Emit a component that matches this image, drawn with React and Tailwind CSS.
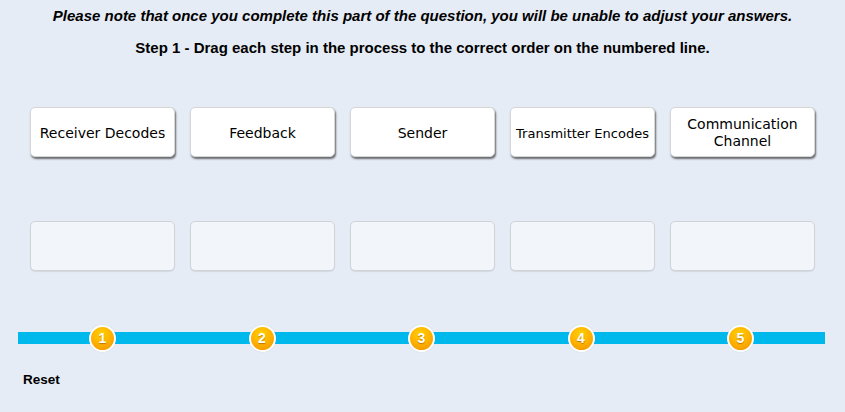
export default function App() {
  const cards = ["Receiver Decodes", "Feedback", "Sender", "Transmitter Encodes", "Communication Channel"];
  return (
    <div className="w-[845px] h-[412px] bg-[#e6ecf5] overflow-hidden" style={{ fontFamily: '"Liberation Sans", Arial, sans-serif' }}>
      <p className="pt-[7px] text-center text-[15px] leading-[18px] font-bold italic text-black">
        Please note that once you complete this part of the question, you will be unable to adjust your answers.
      </p>
      <p className="mt-[14px] text-center text-[15px] leading-[18px] font-bold text-black">
        Step 1 - Drag each step in the process to the correct order on the numbered line.
      </p>
      <div className="mt-[50px] ml-[30px] flex gap-[15px]">
        {cards.map((c) => (
          <div
            key={c}
            className={`w-[145px] h-[50px] pt-[2px] flex items-center justify-center text-center whitespace-nowrap bg-white rounded-[5px] border border-[#d6d6d6] shadow-[1px_2px_2px_rgba(0,0,0,0.55)] text-black ${c === "Transmitter Encodes" ? "text-[13px]" : "text-[14px]"} leading-[17px]`}
            style={{ fontFamily: '"DejaVu Sans", Verdana, sans-serif' }}
          >
            {c === "Communication Channel" ? (
              <span>Communication<br />Channel</span>
            ) : c}
          </div>
        ))}
      </div>
      <div className="mt-[64px] ml-[30px] flex gap-[15px]">
        {cards.map((c) => (
          <div key={c} className="w-[145px] h-[50px] bg-[#f2f5f9] rounded-[5px] border border-[#cfd3d8] shadow-[0_1px_1px_rgba(0,0,0,0.08)]" />
        ))}
      </div>
      <div className="mt-[61px] ml-[18px] w-[807px] h-[12px] bg-[#00b9ec] flex items-center justify-between px-[71px]">
        {[1, 2, 3, 4, 5].map((n) => (
          <div
            key={n}
            className="w-[27px] h-[27px] shrink-0 rounded-full border-2 border-white bg-[radial-gradient(circle_at_45%_30%,#ffd000_0%,#ffb400_45%,#f09000_100%)] flex items-center justify-center text-white font-bold text-[14px] [text-shadow:0_1px_1px_rgba(120,60,0,0.5)] shadow-[0_0_1px_rgba(0,0,0,0.2)]"
          >
            {n}
          </div>
        ))}
      </div>
      <p className="mt-[27px] ml-[23px] text-[13.5px] font-bold text-black leading-[18px]">Reset</p>
    </div>
  );
}
